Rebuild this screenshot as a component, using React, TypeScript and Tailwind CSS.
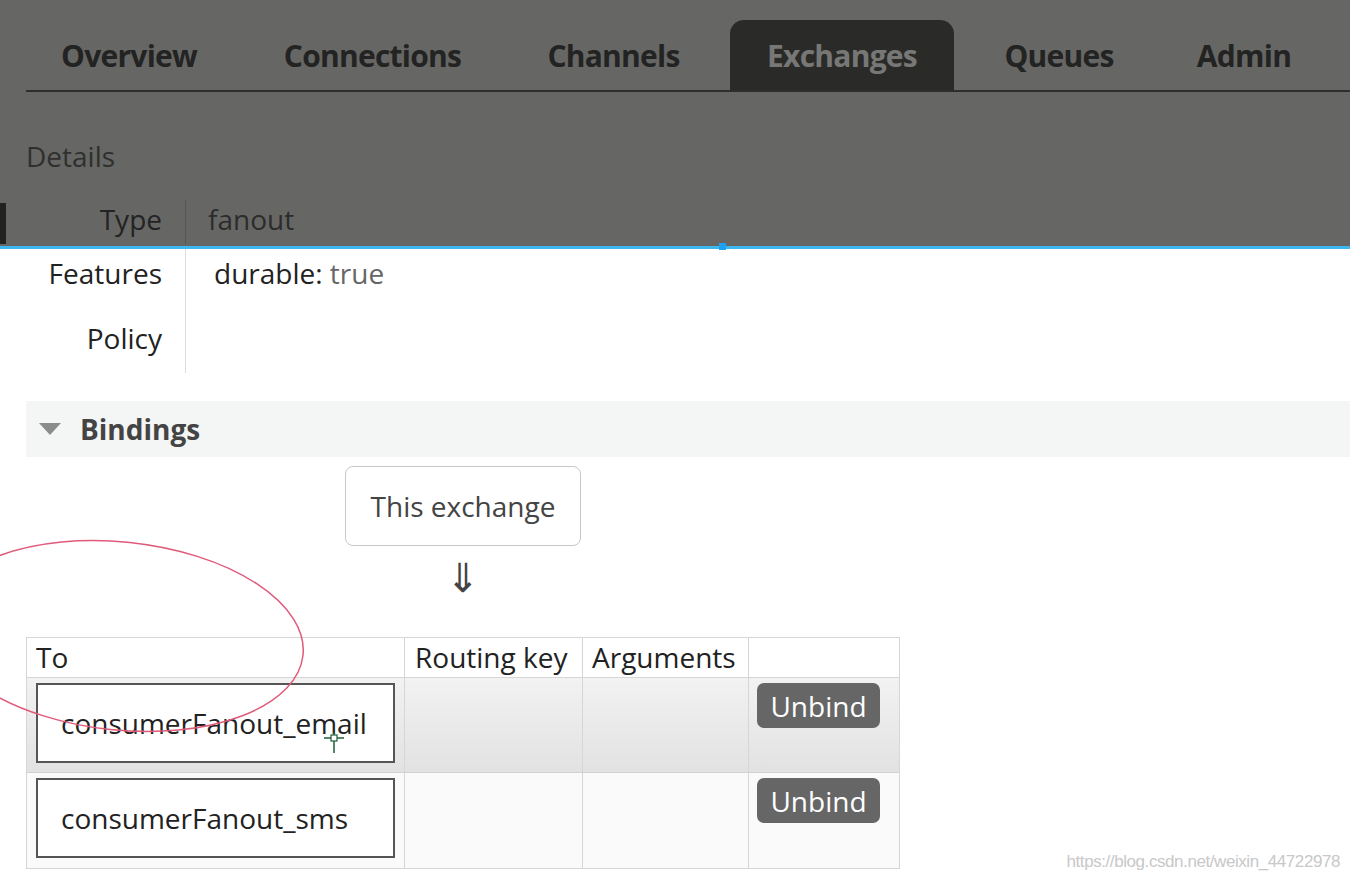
import React from 'react'

const tabs = [
  { name: 'Overview', w: 'w-[206px]' },
  { name: 'Connections', w: 'w-[249px]' },
  { name: 'Channels', w: 'w-[201px]' },
  { name: 'Exchanges', w: 'w-[224px]', active: true },
  { name: 'Queues', w: 'w-[178px]' },
  { name: 'Admin', w: 'w-[160px]' },
]

const bindings = [
  { to: 'consumerFanout_email', row: 'bg-gradient-to-b from-[#f2f2f2] to-[#e2e2e2]' },
  { to: 'consumerFanout_sms', row: 'bg-[#fafafa]' },
]

export default function App() {
  return (
    <div className="relative w-[1350px] h-[882px] overflow-hidden bg-white font-['Open_Sans',sans-serif] text-[28px] text-[#222]">
      {/* dimmed header part */}
      <div className="relative h-[249px] bg-[#666764] border-b-[3px] border-[#3cb8ee]">
        <div className="ml-[26px] pt-[20px] flex gap-[16px] border-b-2 border-[#2e2e2e] h-[92px] items-stretch">
          {tabs.map(t => (
            <div key={t.name}
              className={`${t.w} shrink-0 flex items-center justify-center font-bold text-[30px] tracking-tight ${t.active ? 'bg-[#2a2b29] text-[#777876] rounded-t-[14px]' : 'text-[#232323]'}`}>
              {t.name}
            </div>
          ))}
        </div>
        <div className="ml-[26px] mt-[50px] text-[#2f302e] leading-none">Details</div>
        <div className="mt-[30px] grid grid-cols-[186px_1fr] h-[44px]">
          <div className="relative border-r border-[#555] text-right pr-[23px] text-[#232323] leading-[38px]">
            <span className="absolute left-0 top-[3px] w-[6px] h-[41px] bg-[#222]" />
            Type
          </div>
          <div className="pl-[22px] text-[#2c2c2c] leading-[38px]">fanout</div>
        </div>
        <span className="absolute left-[719px] bottom-[-4px] w-[7px] h-[7px] bg-[#1da1f2]" />
      </div>

      {/* details continued */}
      <div className="grid grid-cols-[186px_1fr]">
        <div className="border-r border-[#ddd] text-right pr-[23px] text-[#222] pb-[14px]">
          <div className="h-[46px] leading-[48px]">Features</div>
          <div className="h-[64px] leading-[86px]">Policy</div>
        </div>
        <div className="pl-[28px] leading-[48px]">
          durable: <span className="text-[#666]">true</span>
        </div>
      </div>

      {/* bindings */}
      <div className="ml-[26px] mt-[28px] h-[56px] bg-[#f4f5f5] flex items-center">
        <svg className="ml-[12px] w-[24px] h-[14px]" viewBox="0 0 24 14"><path d="M1 1 L23 1 L12 13 Z" fill="#8c8c8c" /></svg>
        <span className="ml-[18px] font-bold text-[#444] text-[28px]">Bindings</span>
      </div>

      <div className="mt-[9px] ml-[345px] w-[236px] h-[80px] border border-[#c8c8c8] rounded-[8px] flex items-center justify-center text-[#444]">
        This exchange
      </div>
      <div className="ml-[345px] w-[236px] text-center text-[40px] leading-[62px] text-[#444]">⇓</div>

      <div className="ml-[26px] mt-[29px] w-[874px] border border-[#d6d6d6]">
        <div className="grid grid-cols-[378px_178px_166px_1fr] h-[40px] leading-[38px] border-b border-[#d6d6d6]">
          <div className="pl-[9px] border-r border-[#d6d6d6]">To</div>
          <div className="pl-[10px] border-r border-[#d6d6d6]">Routing key</div>
          <div className="pl-[9px] border-r border-[#d6d6d6]">Arguments</div>
          <div />
        </div>
        {bindings.map((b, i) => (
          <div key={b.to} className={`grid grid-cols-[378px_178px_166px_1fr] h-[95px] ${b.row} ${i === 0 ? 'border-b border-[#d0d0d0]' : ''}`}>
            <div className="border-r border-[#d6d6d6] pl-[9px] pt-[5px]">
              <div className="w-[359px] h-[80px] border-2 border-[#555] bg-white flex items-center pl-[23px]">{b.to}</div>
            </div>
            <div className="border-r border-[#d6d6d6]" />
            <div className="border-r border-[#d6d6d6]" />
            <div className="pl-[8px] pt-[5px]">
              <div className="w-[123px] h-[45px] rounded-[7px] bg-[#666] text-white flex items-center justify-center">Unbind</div>
            </div>
          </div>
        ))}
      </div>

      {/* annotation ellipse */}
      <svg className="absolute left-0 top-[530px] w-[320px] h-[220px]" viewBox="0 0 320 220">
        <ellipse cx="120" cy="106" rx="184" ry="94" transform="rotate(6 120 106)" fill="none" stroke="#e05a7a" strokeWidth="1.5" />
      </svg>
      {/* cursor */}
      <svg className="absolute left-[322px] top-[728px] w-[24px] h-[26px]" viewBox="0 0 24 26">
        <path d="M2 10 H22 M12 4 V25" stroke="#1e5e3a" strokeWidth="1.5" />
        <rect x="9" y="7" width="6" height="6" fill="white" stroke="#1e5e3a" strokeWidth="1.2" />
      </svg>

      <div className="absolute right-[10px] bottom-[8px] text-[17px] text-[#c8c8c8] font-['Liberation_Sans_Narrow','Liberation_Sans',sans-serif] tracking-tight">
        https://blog.csdn.net/weixin_44722978
      </div>
    </div>
  )
}
